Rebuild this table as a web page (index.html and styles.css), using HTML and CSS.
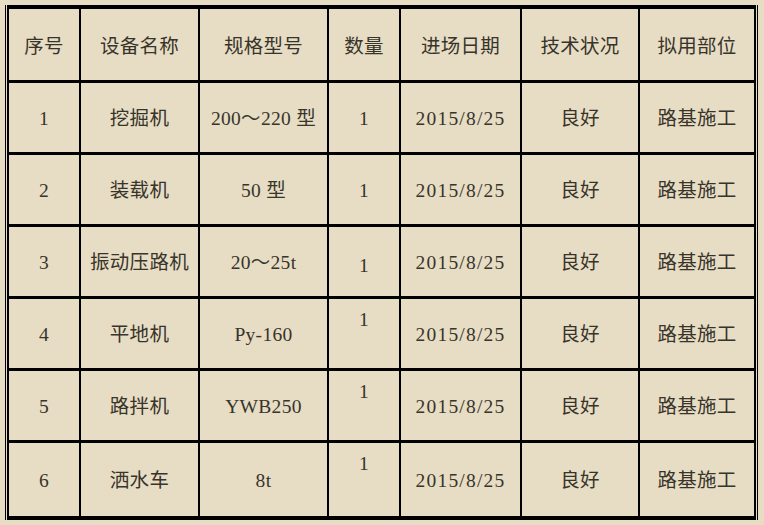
FILE: index.html
```html
<!DOCTYPE html>
<html lang="zh">
<head>
<meta charset="utf-8">
<link rel="stylesheet" href="styles.css">
</head>
<body>
<div class="frame">
<table class="equip">
<colgroup>
<col class="c1"><col class="c2"><col class="c3"><col class="c4"><col class="c5"><col class="c6"><col class="c7">
</colgroup>
<thead>
<tr><th>序号</th><th>设备名称</th><th>规格型号</th><th>数量</th><th>进场日期</th><th>技术状况</th><th>拟用部位</th></tr>
</thead>
<tbody>
<tr><td>1</td><td>挖掘机</td><td>200～220 型</td><td>1</td><td class="d">2015/8/25</td><td>良好</td><td>路基施工</td></tr>
<tr><td>2</td><td>装载机</td><td>50 型</td><td>1</td><td class="d">2015/8/25</td><td>良好</td><td>路基施工</td></tr>
<tr><td>3</td><td>振动压路机</td><td>20～25t</td><td class="low">1</td><td class="d">2015/8/25</td><td>良好</td><td>路基施工</td></tr>
<tr><td>4</td><td>平地机</td><td>Py-160</td><td class="top">1</td><td class="d">2015/8/25</td><td>良好</td><td>路基施工</td></tr>
<tr><td>5</td><td>路拌机</td><td>YWB250</td><td class="top">1</td><td class="d">2015/8/25</td><td>良好</td><td>路基施工</td></tr>
<tr><td>6</td><td>洒水车</td><td>8t</td><td class="top">1</td><td class="d">2015/8/25</td><td>良好</td><td>路基施工</td></tr>
</tbody>
</table>
</div>
</body>
</html>
```

FILE: styles.css
```css
html, body {
  margin: 0;
  padding: 0;
  background: #e7dcc4;
}

body {
  font-family: "Liberation Serif", "Noto Sans CJK SC", serif;
  color: #37342a;
}

.frame {
  margin: 5px 0 0 5px;
  width: 749px;
  border-left: 1px solid #000;
  border-right: 1px solid #000;
  padding: 0 1px;
}

.equip {
  width: 749px;
  table-layout: fixed;
  border-collapse: separate;
  border-spacing: 0;
  border-top: 4px solid #000;
  border-bottom: 4px solid #000;
  border-left: 2px solid #000;
  border-right: 2px solid #000;
}

.c1 { width: 72px; }
.c2 { width: 119px; }
.c3 { width: 129px; }
.c4 { width: 72px; }
.c5 { width: 121px; }
.c6 { width: 118px; }
.c7 { width: 114px; }

.equip th,
.equip td {
  box-sizing: border-box;
  border-right: 2px solid #000;
  border-bottom: 3px solid #000;
  height: 72px;
  padding: 3px 0 0;
  text-align: center;
  vertical-align: middle;
  font-size: 19.5px;
  font-weight: 400;
  line-height: 24px;
  letter-spacing: 0.3px;
  overflow: hidden;
}

.equip thead th {
  height: 74px;
  padding-top: 5px;
}

.equip tbody tr:last-child td {
  border-bottom: 0;
  height: 73px;
}

.equip th:last-child,
.equip td:last-child {
  border-right: 0;
}

.equip td.d {
  letter-spacing: 1.2px;
}

.equip td.low {
  padding-top: 8px;
}

.equip td.top {
  vertical-align: top;
  padding-top: 9px;
}
```
